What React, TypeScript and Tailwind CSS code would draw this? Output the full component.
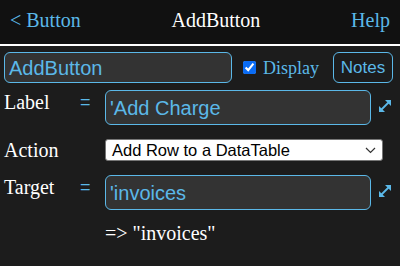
import { useState } from "react";

const serif = "font-['Liberation_Serif',serif]";
const sans = "font-['Liberation_Sans',Arial,sans-serif]";

function ExpandIcon() {
  return (
    <svg width="14" height="14" viewBox="0 0 14 14" className="text-[#5bb8e8]">
      <path d="M3.5 10.5 L10.5 3.5" stroke="currentColor" strokeWidth="1.8" />
      <path d="M13 1 L13 7 L7 1 Z" fill="currentColor" />
      <path d="M1 13 L1 7 L7 13 Z" fill="currentColor" />
    </svg>
  );
}

function Row({ label, value }: { label: string; value: string }) {
  return (
    <div className="flex items-start">
      <div className={`${serif} w-[80px] pl-1 text-[20px] leading-[24px] text-white`}>
        {label}
      </div>
      <div className={`${sans} w-[25px] text-[18px] leading-[24px] text-[#5bb8e8]`}>=</div>
      <div
        className={`${sans} flex h-[35px] w-[266px] items-center rounded-md border border-[#5bb8e8] bg-[#333333] px-1 text-[20px] text-[#5bb8e8]`}
      >
        {value}
      </div>
      <div className="ml-[7px] pt-[9px]">
        <ExpandIcon />
      </div>
    </div>
  );
}

export default function App() {
  const [display, setDisplay] = useState(true);

  return (
    <div className="h-[266px] w-[400px] overflow-hidden bg-[#1c1c1c]">
      <div
        className={`${serif} flex h-[46px] items-center justify-between border-b-2 border-white bg-[#111111] px-[10px] pb-[4px] text-[20px] leading-[24px]`}
      >
        <span className="text-[#5bb8e8]">&lt; Button</span>
        <span className="text-white">AddButton</span>
        <span className="text-[#5bb8e8]">Help</span>
      </div>

      <div className="flex items-center px-1 pt-[6px]">
        <div
          className={`${sans} flex h-[31px] w-[228px] items-center rounded-md border border-[#5bb8e8] bg-[#333333] px-1 text-[20px] text-[#5bb8e8]`}
        >
          AddButton
        </div>
        <label
          className={`${serif} ml-[11px] flex items-center gap-[7px] text-[18px] leading-[24px] text-[#5bb8e8]`}
        >
          <input
            type="checkbox"
            checked={display}
            onChange={() => setDisplay(!display)}
            className="h-[13px] w-[13px] accent-[#0a6cf5]"
          />
          Display
        </label>
        <button
          className={`${sans} ml-auto mr-[3px] h-[31px] w-[60px] rounded-md border border-[#5bb8e8] text-[17px] text-[#5bb8e8]`}
        >
          Notes
        </button>
      </div>

      <div className="pt-[7px]">
        <Row label="Label" value="'Add Charge" />
      </div>

      <div className="mt-[14px] flex h-[22px] items-center">
        <div className={`${serif} w-[105px] pl-1 text-[20px] leading-[22px] text-white`}>
          Action
        </div>
        <div
          className={`${sans} flex h-[22px] w-[278px] items-center justify-between rounded-[3px] border border-[#767676] bg-white pl-[6px] pr-[6px] text-[16.5px] leading-[20px] text-black`}
        >
          <span>Add Row to a DataTable</span>
          <svg width="11" height="7" viewBox="0 0 11 7">
            <path d="M1 1 L5.5 5.5 L10 1" fill="none" stroke="#333" strokeWidth="1.2" />
          </svg>
        </div>
      </div>

      <div className="pt-[14px]">
        <Row label="Target" value="'invoices" />
      </div>

      <div className={`${serif} pl-[105px] pt-[11px] text-[20px] leading-[24px] text-white`}>
        =&gt; "invoices"
      </div>
    </div>
  );
}
